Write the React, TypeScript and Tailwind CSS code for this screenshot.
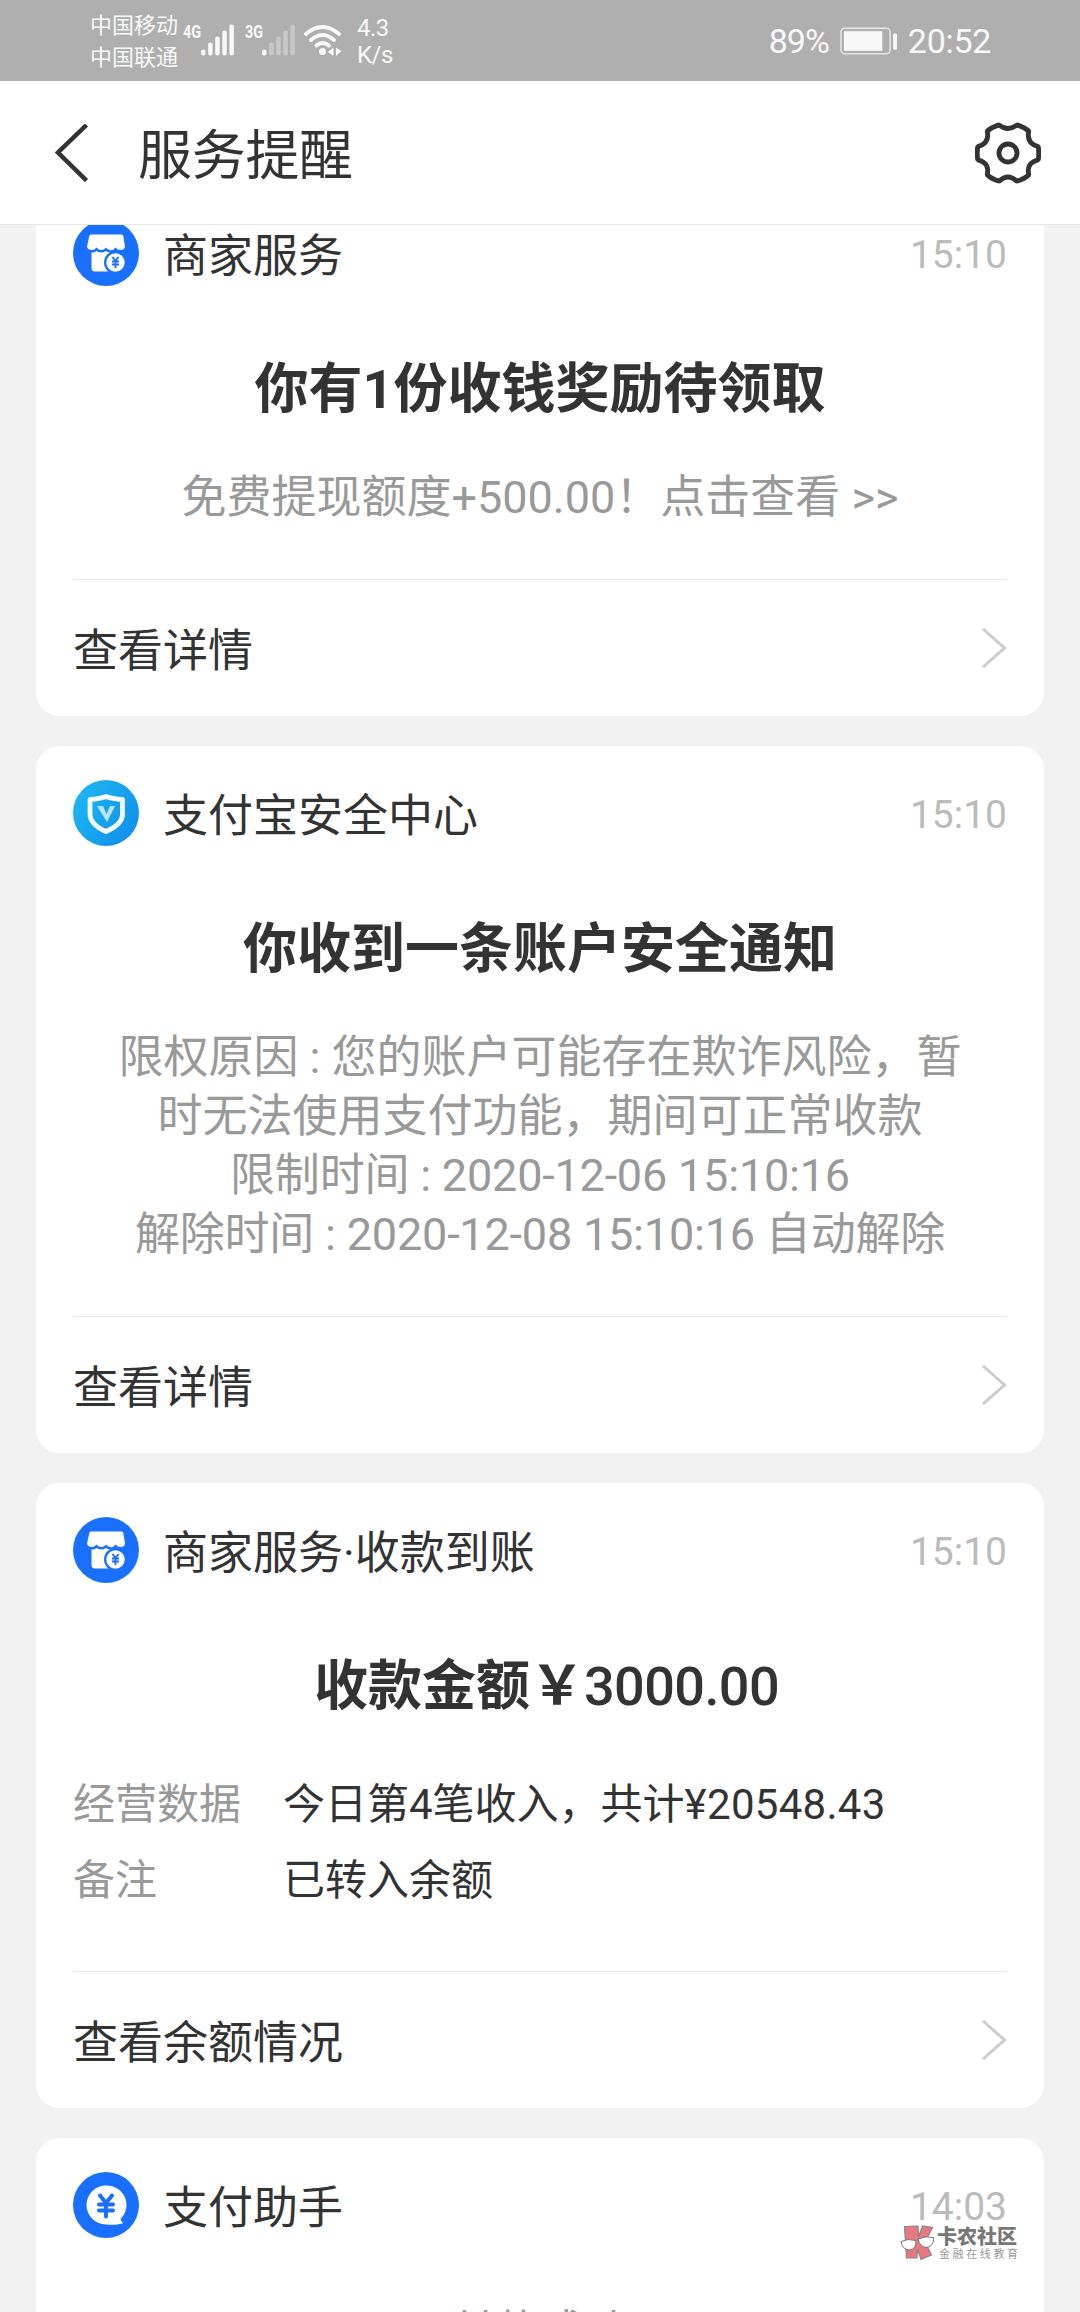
import React from 'react';

const STORE = 'store';
const SHIELD = 'shield';
const PAY = 'pay';

type IconName = typeof STORE | typeof SHIELD | typeof PAY;

const ServiceIcon = ({ name }: { name: IconName }) => {
  if (name === SHIELD) {
    return (
      <svg viewBox="0 0 66 66" className="w-[66px] h-[66px]">
        <defs>
          <linearGradient id="shieldBg" x1="0" y1="0.2" x2="1" y2="0.8">
            <stop offset="0" stopColor="#1cb8f3" />
            <stop offset="1" stopColor="#128eea" />
          </linearGradient>
        </defs>
        <circle cx="33" cy="33" r="33" fill="url(#shieldBg)" />
        <path
          d="M33 16.500C28 18.500 22.500 19.200 17 19.500V34C17 43 25 48 33 51.500C41 48 49.500 43 49.500 34V19.500C44 19.200 38 18.500 33 16.500Z"
          fill="none"
          stroke="#f2fbff"
          strokeWidth="4.800"
          strokeLinejoin="round"
        />
        <path d="M24 26H30L33.500 34L37 26H42L34 42Z" fill="#b9e4fb" />
      </svg>
    );
  }

  if (name === PAY) {
    return (
      <svg viewBox="0 0 66 66" className="w-[66px] h-[66px]">
        <circle cx="33" cy="33" r="33" fill="#1970ff" />
        <path
          d="M33 13.500A19.500 19.500 0 1 0 33 52.500C38 53 44 53 49.500 51.500C50 50 48 49.500 47.500 47A19.500 19.500 0 0 0 33 13.500Z"
          fill="#fff"
        />
        <path
          d="M27 23.500L33 31L39 23.500M26 32.500H40M26 38.500H40M33 31V44.500"
          fill="none"
          stroke="#1970ff"
          strokeWidth="4"
          strokeLinecap="round"
          strokeLinejoin="round"
        />
      </svg>
    );
  }

  return (
    <svg viewBox="0 0 66 66" className="w-[66px] h-[66px]">
      <circle cx="33" cy="33" r="33" fill="#1970ff" />
      <path
        d="M18 14.500H48.500Q50 14.500 50.300 16L52 26.500Q51.500 30 47.500 30Q44.500 30 42.500 27.500Q40 31 37 30Q34.500 29.500 33 27.500Q31 30 28.500 30Q25.500 30 23.500 27.500Q21 30.500 18 30Q14.500 29.500 14 26.500L16.300 16Q16.500 14.500 18 14.500Z"
        fill="#fff"
      />
      <path
        d="M18.500 32.500Q21 33 23.500 31Q28 34 33 31Q36 33.500 40 32.500V51.500H22Q18.500 51.500 18.500 48Z"
        fill="#fff"
      />
      <circle cx="42.500" cy="42.500" r="11.500" fill="#1970ff" />
      <circle cx="42.500" cy="42.500" r="9.200" fill="#fff" />
      <path
        d="M39.500 37L42.500 41L45.500 37M39 41.500H46M39 44.500H46M42.500 41V48"
        fill="none"
        stroke="#1970ff"
        strokeWidth="1.900"
      />
    </svg>
  );
};

const Signal = ({ active }: { active: number }) => (
  <svg viewBox="0 0 34 32" className="w-[34px] h-8">
    {[6, 13, 19, 25, 31].map((h, i) => (
      <rect key={h} x={i * 7.1} y={31.5 - h} width="4.500" height={h} rx="2" fill={i < active ? '#f8f8f8' : '#c8c8c8'} />
    ))}
  </svg>
);

const StatusBar = () => (
  <div className="flex h-[81px] shrink-0 bg-[#afafaf] text-[#f8f8f8]">
    <div className="ml-[90px] pt-[10px] text-[22px] leading-[32px]">
      <div>中国移动</div>
      <div>中国联通</div>
    </div>
    <div className="ml-[5px] mt-[22px] flex h-[36px]">
      <span className="w-[18px] origin-left scale-x-80 text-[18px] leading-[20px] font-bold">4G</span>
      <div className="pt-[2px]">
        <Signal active={5} />
      </div>
      <span className="ml-[10px] w-[17px] origin-left scale-x-80 text-[18px] leading-[20px] font-bold">3G</span>
      <div className="pt-[2px]">
        <Signal active={1} />
      </div>
    </div>
    <svg viewBox="0 0 38 32" className="ml-[8px] mt-[25px] h-8 w-[38px]">
      <g fill="none" stroke="#f8f8f8" strokeWidth="4" strokeLinecap="round">
        <path d="M2 9Q18.500 -5 35 9" />
        <path d="M7 15Q18.500 5 30 15" />
        <path d="M12.500 20.500Q18.500 15.500 25 20.500" />
      </g>
      <circle cx="18.500" cy="26.500" r="3.500" fill="#f8f8f8" />
      <path d="M29.500 22.500V31L24 27ZM32 22.500V31L37.500 26Z" fill="#f8f8f8" />
    </svg>
    <div className="ml-[15px] pt-[15px] text-[24px] leading-[27px] tracking-[-0.500px]">
      <div>4.3</div>
      <div>K/s</div>
    </div>
    <div className="ml-auto mr-[89px] flex h-[81px] items-center">
      <span className="pt-[2px] text-[34px] tracking-[-1px]">89%</span>
      <svg viewBox="0 0 60 28" className="mr-[9px] ml-[11px] h-7 w-[59px]">
        <rect x="1" y="1" width="50" height="26" rx="4" fill="none" stroke="#e6e6e6" strokeWidth="1.500" />
        <rect x="4" y="4" width="39" height="20" fill="#f8f8f8" />
        <rect x="54" y="6" width="4" height="17" rx="2" fill="#f8f8f8" />
      </svg>
      <span className="pt-[2px] text-[34px] tracking-[-0.300px]">20:52</span>
    </div>
  </div>
);

const Header = () => (
  <div className="flex h-[144px] shrink-0 items-center border-b border-[#e8e8e8] bg-white">
    <svg viewBox="0 0 34 58" className="ml-[55px] h-[58px] w-[34px]">
      <path d="M31.500 1L3 28.500L31.500 56.500" fill="none" stroke="#333" strokeWidth="4.500" />
    </svg>
    <h1 className="ml-[49px] pt-[9px] text-[54px] leading-[80px] tracking-[-0.300px] text-[#333]">服务提醒</h1>
    <svg viewBox="0 0 68 66" className="ml-auto mr-[39px] h-[64px] w-[66px]">
      <path
        d="M24.500 4Q17 6.500 12.500 10.500Q15.500 23 2.800 26.500Q1.800 33 2.800 40Q15.500 43 12.500 55.500Q17 60 25 62Q34 53.500 43 62Q51 60 55.500 55.500Q52.500 43 65.200 40Q66.200 33 65.200 26.500Q52.500 23 55.500 10.500Q51 6.500 43.500 4Q34 11.500 24.500 4Z"
        fill="none"
        stroke="#333"
        strokeWidth="5"
        strokeLinejoin="bevel"
      />
      <circle cx="34" cy="33" r="9.300" fill="none" stroke="#333" strokeWidth="5" />
    </svg>
  </div>
);

interface CardProps {
  icon: IconName;
  name: string;
  time: string;
  title?: React.ReactNode;
  link?: string;
  children?: React.ReactNode;
}

const Card = ({ icon, name, time, title, link, children }: CardProps) => (
  <section className="rounded-[24px] bg-white px-[37px] pt-[34px] text-[#333]">
    {/* Service name and time */}
    <div className="flex h-[66px] items-center">
      <ServiceIcon name={icon} />
      <span className="mt-[7px] ml-[24px] text-[45px] leading-[66px]">{name}</span>
      <span className="mt-[3px] ml-auto text-[39px] leading-[66px] text-[#bbb]">{time}</span>
    </div>
    {title && <h2 className="mt-[64px] text-center text-[54px] leading-[80px] font-bold">{title}</h2>}
    {children}
    {link && (
      <div className="flex h-[137px] items-center justify-between border-t border-[#eaeaea] text-[45px]">
        <span className="pt-[7px]">{link}</span>
        <svg viewBox="0 0 26 40" className="h-10 w-[26px]">
          <path d="M2 1L23.500 20L2 39" fill="none" stroke="#ccc" strokeWidth="3" />
        </svg>
      </div>
    )}
  </section>
);

const Watermark = () => (
  <div className="absolute top-[2225px] left-[900px] flex">
    <svg viewBox="0 0 35 37" className="h-[37px] w-[35px]">
      <path
        d="M4.500 1.500L18 1L18.500 12L22.500 1L32.500 2.500L25 17L31.500 30L21 34.500L17.500 24L17 33L6.500 33Z"
        fill="#e87880"
        stroke="#888"
        strokeWidth="1.200"
      />
      <g fill="#fff" stroke="#777" strokeWidth="1">
        <path d="M1 16.500Q8 13 16 15.500Q16.500 24 9.500 25Q2 24.500 1 16.500Z" />
        <path d="M18 14Q26 10.500 33.500 12.500Q34 21 27 22.500Q20 22.500 18 14Z" />
      </g>
    </svg>
    <div className="ml-[2px] pt-[2px] whitespace-nowrap">
      <div className="text-[20px] leading-[21px] font-black text-[#777]">卡农社区</div>
      <div className="ml-[2px] text-[11px] leading-[13px] tracking-[2.600px] text-[#999]">金融在线教育</div>
    </div>
  </div>
);

const App = () => {
  return (
    <div className="relative flex h-[2312px] w-[1080px] flex-col overflow-hidden bg-[#f2f2f2] font-[Roboto,'Noto_Sans_CJK_SC',sans-serif]">
      <StatusBar />
      <Header />
      <main className="min-h-0 flex-1 overflow-hidden px-9">
        <div className="-mt-[39px] space-y-[30px]">
          <Card icon={STORE} name="商家服务" time="15:10" title="你有1份收钱奖励待领取" link="查看详情">
            <p className="mt-[38px] mb-[52px] text-center text-[45px] leading-[59px] text-[#999]">
              免费提现额度+500.00！点击查看 &gt;&gt;
            </p>
          </Card>

          <Card icon={SHIELD} name="支付宝安全中心" time="15:10" title="你收到一条账户安全通知" link="查看详情">
            <div className="mt-[38px] mb-[52px] text-center text-[45px] leading-[59px] text-[#999]">
              <p>限权原因 : 您的账户可能存在欺诈风险，暂</p>
              <p>时无法使用支付功能，期间可正常收款</p>
              <p className="tracking-[-0.200px]">限制时间 : 2020-12-06 15:10:16</p>
              <p className="tracking-[-0.200px]">解除时间 : 2020-12-08 15:10:16 自动解除</p>
            </div>
          </Card>

          <Card
            icon={STORE}
            name="商家服务·收款到账"
            time="15:10"
            title={
              <span className="pl-[13px]">
                收款金额￥<span className="font-medium tracking-[-0.600px]">3000.00</span>
              </span>
            }
            link="查看余额情况"
          >
            <dl className="mt-[40px] mb-[52px] grid grid-cols-[210px_1fr] text-[42px] leading-[76px]">
              <dt className="text-[#999]">经营数据</dt>
              <dd>
                今日第4笔收入，共计<span className="tracking-[0.300px]">¥20548.43</span>
              </dd>
              <dt className="text-[#999]">备注</dt>
              <dd>已转入余额</dd>
            </dl>
          </Card>

          <Card icon={PAY} name="支付助手" time="14:03">
            <p className="mt-[65px] text-center text-[45px] leading-[59px] text-[#999]">付款成功</p>
          </Card>
        </div>
      </main>
      <Watermark />
    </div>
  );
};

export default App;
